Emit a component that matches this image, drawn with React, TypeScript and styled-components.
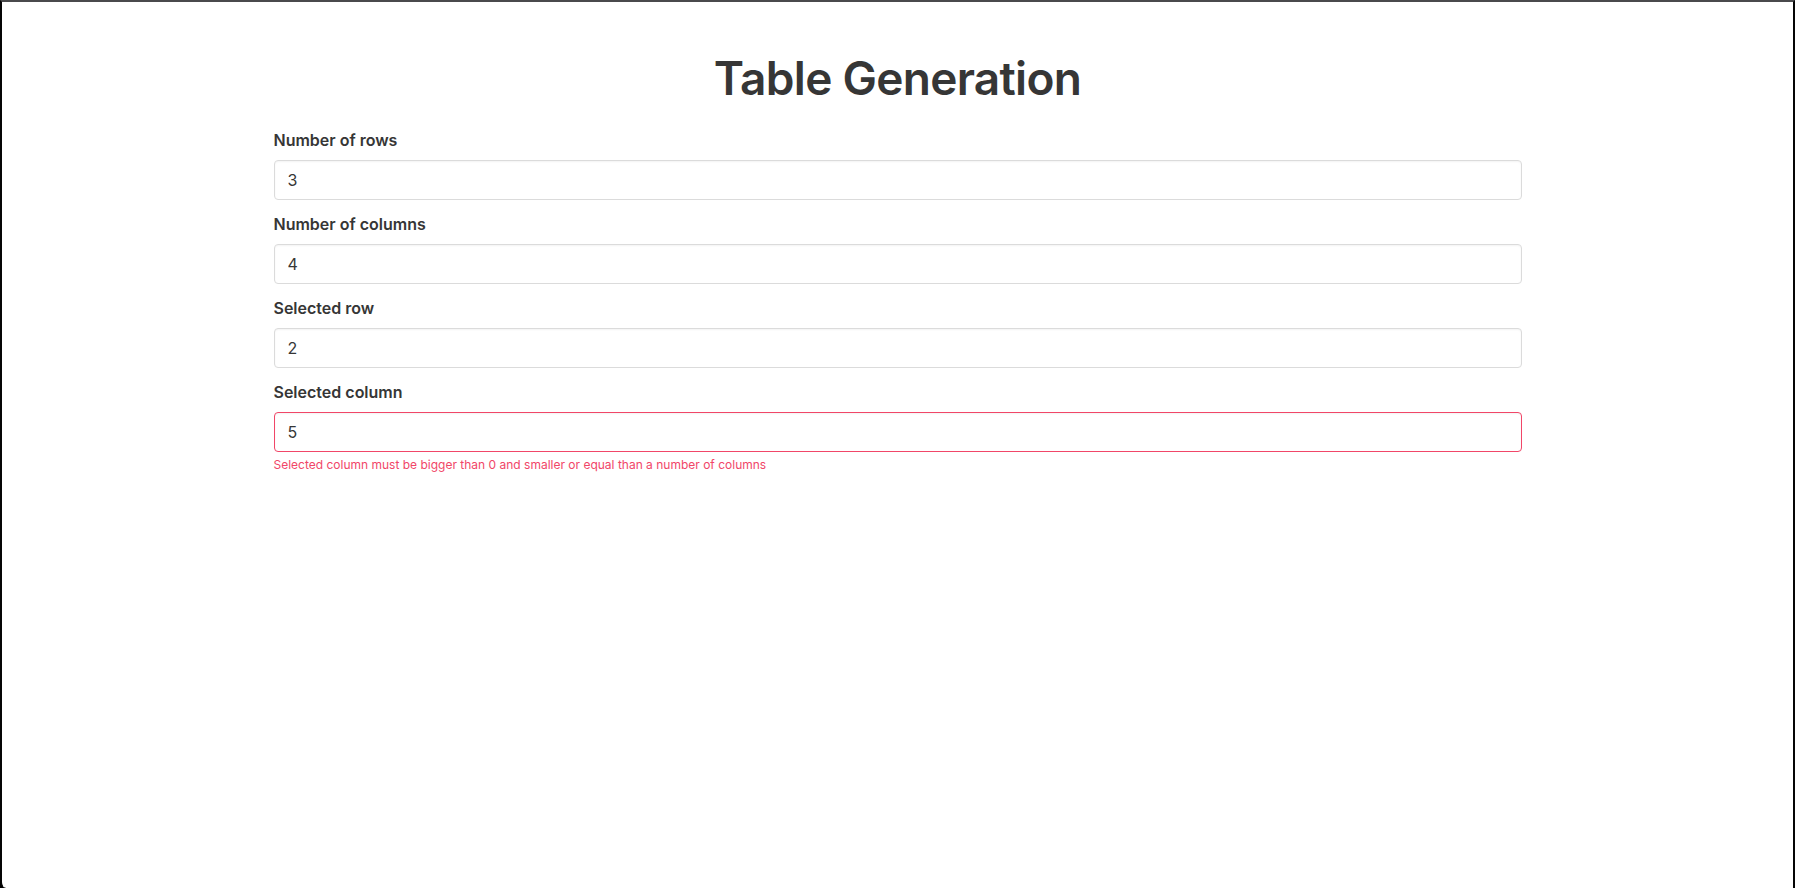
import React from "react";
import styled, { createGlobalStyle } from "styled-components";

const Global = createGlobalStyle`
  *, *::before, *::after { box-sizing: border-box; }
  html, body { margin: 0; padding: 0; height: 100%; background: #000; }
  body {
    font-family: Inter, "Noto Sans", "Liberation Sans", sans-serif;
    color: #363636;
    font-size: 16px;
  }
  #root { height: 100%; }
`;

const Frame = styled.div`
  height: 100vh;
  background: #fff;
  border-top: 2px solid #4a4a4c;
  border-left: 2px solid #050505;
  border-right: 2px solid #050505;
  border-bottom-left-radius: 6px;
  overflow: hidden;
`;

const Section = styled.section`
  padding: 48px 24px;
`;

const Container = styled.div`
  width: 1248px;
  margin: 0 auto;
`;

const Title = styled.h1`
  margin: 0 0 24px;
  height: 54px;
  text-align: center;
  font-size: 46px;
  font-weight: 600;
  line-height: 56px;
  color: #363636;
  letter-spacing: -0.7px;
`;

const Field = styled.div`
  margin-bottom: 12px;
`;

const Label = styled.label`
  display: block;
  margin-bottom: 8px;
  font-size: 16px;
  font-weight: 600;
  line-height: 1.5;
  color: #363636;
`;

const Input = styled.input<{ $danger?: boolean }>`
  display: block;
  width: 100%;
  height: 40px;
  padding: 7px 11px 7px 13px;
  font-family: inherit;
  font-size: 16px;
  line-height: 1.5;
  color: #363636;
  background: #fff;
  border: 1px solid ${(p) => (p.$danger ? "#f14668" : "#dbdbdb")};
  border-radius: 4px;
  box-shadow: inset 0 1px 2px rgba(10, 10, 10, 0.05);
  outline: none;
`;

const Help = styled.p`
  margin: 4px 0 0;
  font-size: 12px;
  line-height: 1.5;
  color: #f14668;
`;

const fields = [
  { label: "Number of rows", value: "3" },
  { label: "Number of columns", value: "4" },
  { label: "Selected row", value: "2" },
  {
    label: "Selected column",
    value: "5",
    error:
      "Selected column must be bigger than 0 and smaller or equal than a number of columns",
  },
];

export default function App() {
  return (
    <>
      <Global />
      <Frame>
        <Section>
          <Container>
            <Title>Table Generation</Title>
            {fields.map((f) => (
              <Field key={f.label}>
                <Label>{f.label}</Label>
                <Input
                  type="text"
                  defaultValue={f.value}
                  $danger={!!f.error}
                  readOnly
                />
                {f.error && <Help>{f.error}</Help>}
              </Field>
            ))}
          </Container>
        </Section>
      </Frame>
    </>
  );
}
